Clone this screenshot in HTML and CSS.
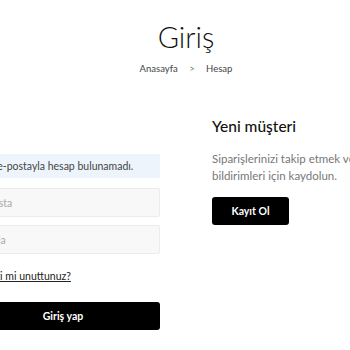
FILE: index.html
```html
<!DOCTYPE html>
<html lang="tr">
<head>
  <meta charset="UTF-8">
  <title>Giriş</title>
  <link rel="stylesheet" href="styles.css">
</head>
<body>
  <header class="page-head">
    <h1>Giriş</h1>
    <nav class="crumbs">
      <a href="#">Anasayfa</a>
      <span class="sep">&gt;</span>
      <span>Hesap</span>
    </nav>
  </header>

  <main class="account">
    <section class="login">
      <h2>Giriş</h2>
      <div class="alert">Bu e-postayla hesap bulunamadı.</div>
      <form>
        <input type="email" placeholder="E-posta">
        <input type="password" placeholder="Parola">
        <a class="forgot" href="#">Şifrenizi mi unuttunuz?</a>
        <button type="submit" class="btn btn-wide">Giriş yap</button>
      </form>
    </section>

    <section class="register">
      <h2>Yeni müşteri</h2>
      <p>Siparişlerinizi takip etmek ve promosyon bildirimleri için kaydolun.</p>
      <a class="btn" href="#">Kayıt Ol</a>
    </section>
  </main>
</body>
</html>
```

FILE: styles.css
```css
html, body {
  overflow: hidden;
}
body {
  margin: 0;
  width: 372px;
  font-family: Lato, "Noto Sans", sans-serif;
  color: #111;
  background-color: #fff;
}
.page-head {
  text-align: center;
  padding-top: 17px;
}
.page-head h1 {
  margin: 0;
  font-size: 29px;
  font-weight: 300;
  line-height: 40px;
}
.crumbs {
  margin-top: 6px;
  font-size: 9.5px;
  color: #444;
}
.crumbs a {
  color: #444;
  text-decoration: none;
}
.crumbs .sep {
  margin: 0 9px;
  color: #777;
}
.account {
  display: grid;
  grid-template-columns: 194px 194px;
  gap: 52px;
  margin: 40px -34px 0;
}
h2 {
  margin: 0;
  font-size: 15.5px;
  font-weight: 500;
  line-height: 24px;
}
.login h2 {
  text-align: right;
  padding-right: 160px;
}
.alert {
  margin-top: 16px;
  padding: 0 16px;
  height: 24px;
  line-height: 24px;
  font-size: 10.5px;
  color: #444;
  background-color: #eef4fc;
  border-radius: 2px;
}
form {
  display: flex;
  flex-direction: column;
}
input {
  margin-top: 10px;
  height: 29px;
  padding: 0 10px;
  font: inherit;
  font-size: 10.5px;
  border: 1px solid #ececec;
  background-color: #f8f8f8;
  border-radius: 2px;
  box-sizing: border-box;
}
input + input {
  margin-top: 8px;
}
input::placeholder {
  color: #aaa;
}
.forgot {
  margin-top: 15px;
  font-size: 10.5px;
  color: #222;
  line-height: 14px;
}
.btn {
  display: inline-block;
  height: 28px;
  padding: 0 20px;
  font: inherit;
  font-size: 10.5px;
  font-weight: 700;
  line-height: 28px;
  color: #fff;
  background-color: #000;
  border: none;
  border-radius: 3px;
  text-decoration: none;
  text-align: center;
}
.btn-wide {
  margin-top: 19px;
  width: 100%;
}
.register p {
  margin: 12px 0 0;
  width: 225px;
  font-size: 11.5px;
  line-height: 17px;
  color: #777;
}
.register .btn {
  margin-top: 13px;
  width: 77px;
  padding: 0;
}
```
